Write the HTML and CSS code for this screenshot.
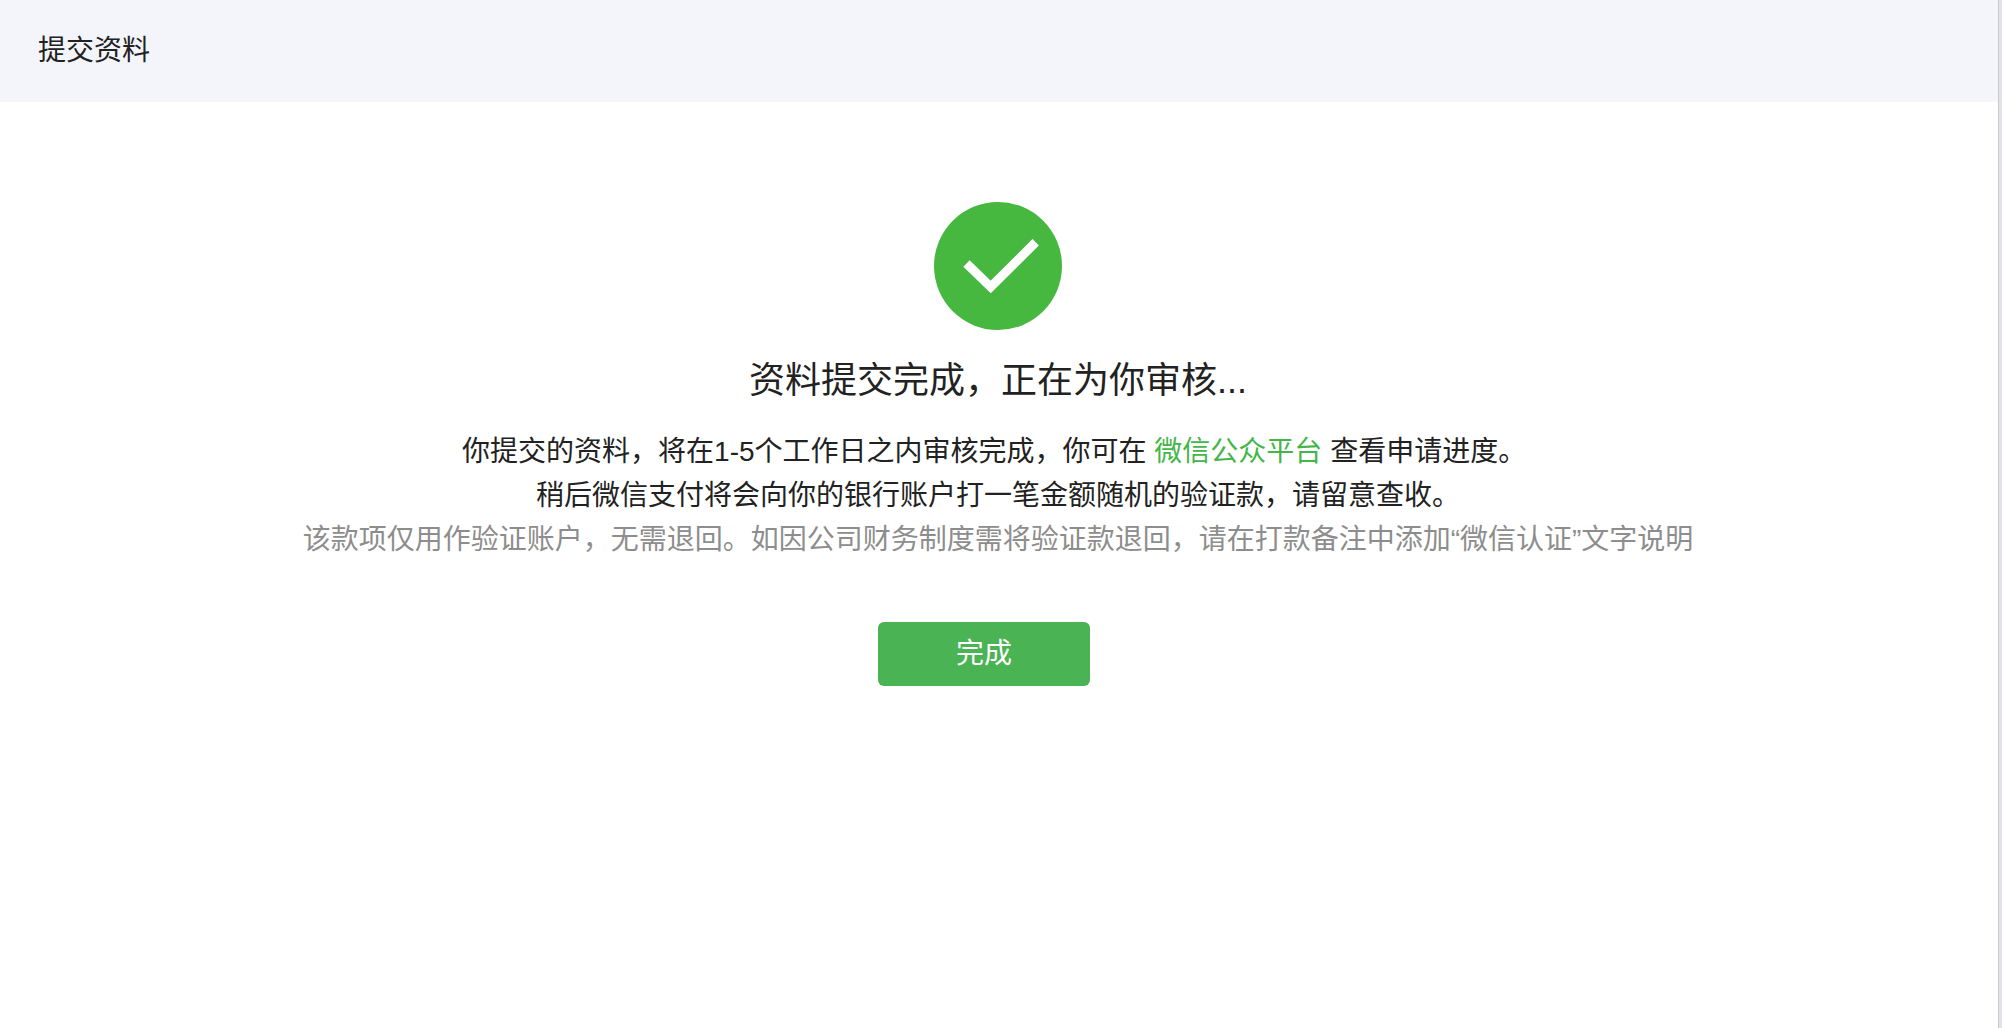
FILE: index.html
```html
<!DOCTYPE html>
<html lang="zh-CN">

<head>
    <meta charset="UTF-8">
    <meta name="viewport" content="width=device-width, initial-scale=1.0">
    <title>提交资料</title>
    <link rel="stylesheet" href="styles.css">
</head>

<body>
    <header class="page-header">
        <h1>提交资料</h1>
    </header>
    <main class="result">
        <svg class="result-icon" viewBox="0 0 128 128" aria-hidden="true">
            <circle cx="64" cy="64" r="64" fill="#46b840" />
            <path d="M32.5 61.5 L56.7 85 L101.7 40.3" fill="none" stroke="#fff" stroke-width="9" />
        </svg>
        <h2>资料提交完成，正在为你审核...</h2>
        <div class="result-text">
            <p>你提交的资料，将在1-5个工作日之内审核完成，你可在 <a href="#">微信公众平台</a> 查看申请进度。&nbsp;</p>
            <p>稍后微信支付将会向你的银行账户打一笔金额随机的验证款，请留意查收。</p>
            <p class="tips">该款项仅用作验证账户，无需退回。如因公司财务制度需将验证款退回，请在打款备注中添加“微信认证”文字说明</p>
        </div>
        <div class="buttons">
            <button type="button" class="btn">完成</button>
        </div>
    </main>
</body>

</html>
```

FILE: styles.css
```css
* {
    box-sizing: border-box;
}

html {
    border-right: 3px solid #e2e2e8;
}

body {
    margin: 0;
    min-height: 100vh;
    border-right: 1px solid #cacace;
    background: #fff;
    color: #222;
    font-family: "Liberation Sans", "Noto Sans CJK SC", sans-serif;
    font-size: 28px;
    line-height: 44px;
}

h1,
h2,
p {
    margin: 0;
    font-weight: normal;
}

.page-header {
    padding: 29px 38px 25px;
    border-bottom: 4px solid #f6f6f7;
    background: #f4f5fa;
}

.page-header h1 {
    font-size: 28px;
}

.result {
    display: flex;
    flex-direction: column;
    align-items: center;
    padding: 100px 22px 100px 20px;
    text-align: center;
}

.result-icon {
    width: 128px;
    height: 128px;
}

.result h2 {
    margin-top: 25px;
    font-size: 36px;
    line-height: 52px;
}

.result-text {
    margin-top: 23px;
}

.result-text a {
    color: #44b549;
    text-decoration: none;
}

.tips {
    color: #8d8d8d;
}

.buttons {
    margin-top: 60px;
}

.btn {
    width: 212px;
    height: 64px;
    margin-right: 28px;
    padding: 0;
    border: 0;
    border-radius: 6px;
    background: #4ab354;
    color: #fff;
    font: inherit;
    cursor: pointer;
}
```
